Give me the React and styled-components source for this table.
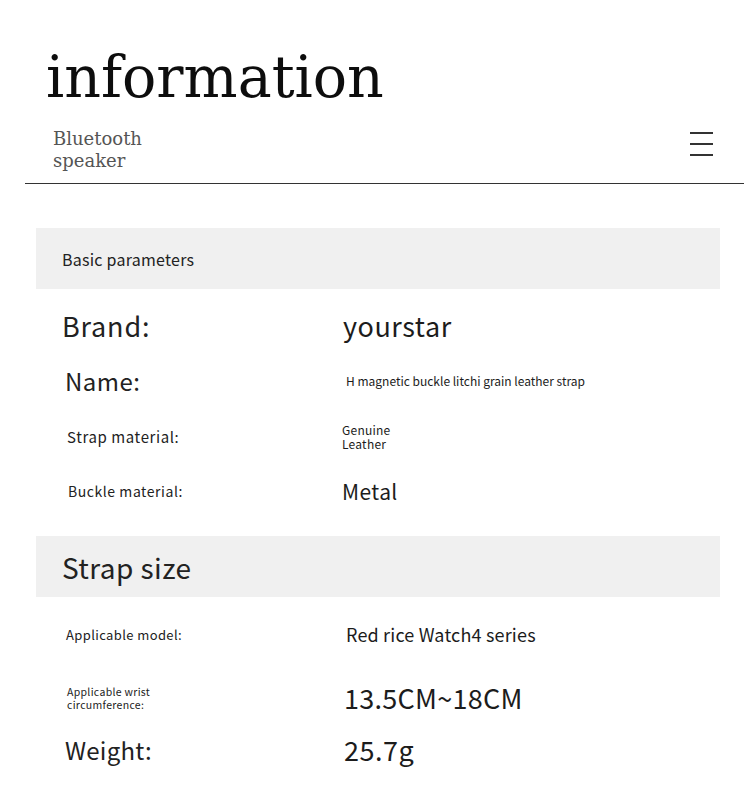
import React from 'react';
import styled, { createGlobalStyle } from 'styled-components';

const GlobalStyle = createGlobalStyle`
  body {
    margin: 0;
    background: #ffffff;
    font-family: 'Noto Sans CJK SC', 'Noto Sans', sans-serif;
    color: #222222;
  }
`;

const Page = styled.div`
  width: 750px;
  min-height: 786px;
  background: #ffffff;
  overflow: hidden;
`;

const Header = styled.header`
  margin: 0 6px 0 25px;
  padding-top: 49px;
  padding-bottom: 11px;
  border-bottom: 1px solid #333333;
`;

const Title = styled.h1`
  margin: 0;
  padding-left: 21px;
  font-family: 'DejaVu Serif', 'Liberation Serif', serif;
  font-weight: 400;
  font-size: 57px;
  line-height: 57px;
  color: #0d0d0d;
`;

const SubRow = styled.div`
  display: flex;
  justify-content: space-between;
  align-items: flex-start;
  margin-top: 22px;
  padding: 0 31px 0 28px;
`;

const Subtitle = styled.div`
  font-family: 'DejaVu Serif', 'Liberation Serif', serif;
  font-size: 18px;
  line-height: 22px;
  color: #555555;
`;

const Burger = styled.div`
  display: flex;
  flex-direction: column;
  gap: 9.5px;
  width: 23px;
  margin-top: 4px;

  span {
    display: block;
    height: 1.5px;
    background: #333333;
  }
`;

const Sheet = styled.main`
  padding: 44px 30px 0 36px;
`;

const SectionBar = styled.div`
  display: flex;
  align-items: center;
  height: 61px;
  padding-left: 26px;
  background: #f0f0f0;
  font-size: ${(p) => p.$size}px;
  letter-spacing: 0.015em;
  color: #222222;
`;

const Rows = styled.div`
  padding: ${(p) => p.$pad};
`;

const Row = styled.div`
  display: grid;
  grid-template-columns: 280px 1fr;
  align-items: center;
  height: ${(p) => p.$h}px;
  padding-left: 26px;
`;

const Label = styled.div`
  padding-left: ${(p) => p.$shift || 0}px;
  font-size: ${(p) => p.$size}px;
  line-height: ${(p) => p.$lh || 1.2};
  letter-spacing: ${(p) => p.$track ?? 0.02}em;
  color: #222222;
`;

const Value = styled.div`
  padding-left: ${(p) => p.$shift || 0}px;
  font-size: ${(p) => p.$size}px;
  line-height: ${(p) => p.$lh || 1.2};
  letter-spacing: ${(p) => p.$track ?? 0.02}em;
  color: #1c1c1c;
`;

const basic = [
  { label: 'Brand:', ls: 27, lt: 0.03, value: 'yourstar', vs: 27, vshift: 1 },
  { label: 'Name:', ls: 24, lshift: 3, value: 'H magnetic buckle litchi grain leather strap', vs: 12, vt: 0, vshift: 4 },
  { label: 'Strap material:', ls: 15, lt: 0.04, lshift: 5, value: ['Genuine', 'Leather'], vs: 12, vlh: '14px', vshift: -1 },
  { label: 'Buckle material:', ls: 14, lt: 0.04, lshift: 6, value: 'Metal', vs: 21 },
];

const size = [
  { label: 'Applicable model:', ls: 13, lt: 0.03, lshift: 4, value: 'Red rice Watch4 series', vs: 18, vt: 0.01, vshift: 4, h: 56 },
  { label: ['Applicable wrist', 'circumference:'], ls: 10.5, lt: 0.03, llh: '13px', lshift: 5, value: '13.5CM~18CM', vs: 27, vt: 0.01, vshift: 2, h: 70 },
  { label: 'Weight:', ls: 24, lt: 0.01, lshift: 3, value: '25.7g', vs: 27, vshift: 2, h: 34 },
];

const lines = (t) => (Array.isArray(t) ? t.map((s) => <div key={s}>{s}</div>) : t);

function ParamRow({ item, h }) {
  return (
    <Row $h={item.h || h}>
      <Label $size={item.ls} $shift={item.lshift} $lh={item.llh} $track={item.lt}>
        {lines(item.label)}
      </Label>
      <Value $size={item.vs} $shift={item.vshift} $lh={item.vlh} $track={item.vt}>
        {lines(item.value)}
      </Value>
    </Row>
  );
}

export default function App() {
  return (
    <Page>
      <GlobalStyle />
      <Header>
        <Title>information</Title>
        <SubRow>
          <Subtitle>
            Bluetooth
            <br />
            speaker
          </Subtitle>
          <Burger>
            <span />
            <span />
            <span />
          </Burger>
        </SubRow>
      </Header>
      <Sheet>
        <SectionBar $size={16}>Basic parameters</SectionBar>
        <Rows $pad="10px 0 17px">
          {basic.map((item, i) => (
            <ParamRow key={i} item={item} h={55} />
          ))}
        </Rows>
        <SectionBar $size={28}>Strap size</SectionBar>
        <Rows $pad="10px 0 0">
          {size.map((item, i) => (
            <ParamRow key={i} item={item} />
          ))}
        </Rows>
      </Sheet>
    </Page>
  );
}
